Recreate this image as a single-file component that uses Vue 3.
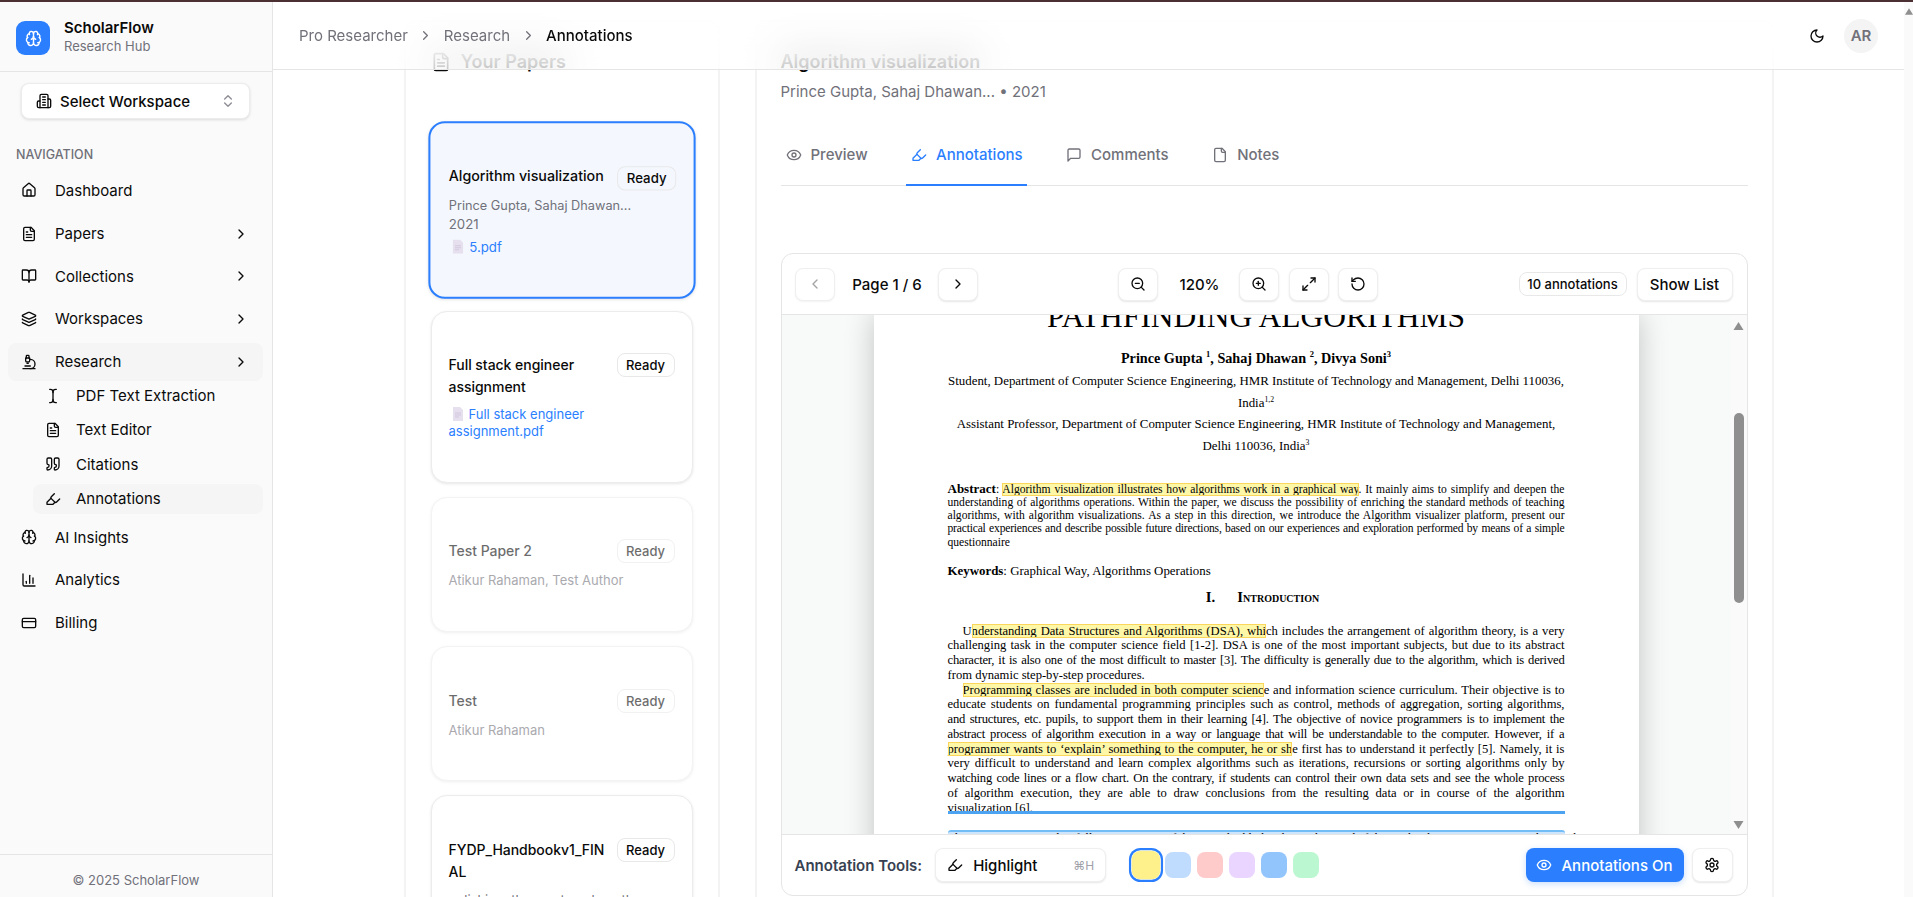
<script setup>
import { h } from "vue";

const icons = {
  brain: ["M12 18V5", "M15 13a4.17 4.17 0 0 1-3-4 4.17 4.17 0 0 1-3 4", "M17.598 6.5A3 3 0 1 0 12 5a3 3 0 1 0-5.598 1.5", "M17.997 5.125a4 4 0 0 1 2.526 5.77", "M18 18a4 4 0 0 0 2-7.464", "M19.967 17.483A4 4 0 1 1 12 18a4 4 0 1 1-7.967-.517", "M6 18a4 4 0 0 1-2-7.464", "M6.003 5.125a4 4 0 0 0-2.526 5.77"],
  building: ["M6 22V4a2 2 0 0 1 2-2h8a2 2 0 0 1 2 2v18Z", "M6 12H4a2 2 0 0 0-2 2v6a2 2 0 0 0 2 2h2", "M18 9h2a2 2 0 0 1 2 2v9a2 2 0 0 1-2 2h-2", "M10 6h4", "M10 10h4", "M10 14h4", "M10 18h4"],
  updown: ["m7 15 5 5 5-5", "m7 9 5-5 5 5"],
  house: ["M15 21v-8a1 1 0 0 0-1-1h-4a1 1 0 0 0-1 1v8", "M3 10a2 2 0 0 1 .709-1.528l7-5.999a2 2 0 0 1 2.582 0l7 5.999A2 2 0 0 1 21 10v9a2 2 0 0 1-2 2H5a2 2 0 0 1-2-2z"],
  filetext: ["M15 2H6a2 2 0 0 0-2 2v16a2 2 0 0 0 2 2h12a2 2 0 0 0 2-2V7Z", "M14 2v4a2 2 0 0 0 2 2h4", "M10 9H8", "M16 13H8", "M16 17H8"],
  book: ["M12 7v14", "M3 18a1 1 0 0 1-1-1V4a1 1 0 0 1 1-1h5a4 4 0 0 1 4 4 4 4 0 0 1 4-4h5a1 1 0 0 1 1 1v13a1 1 0 0 1-1 1h-6a3 3 0 0 0-3 3 3 3 0 0 0-3-3z"],
  layers: ["M12.83 2.18a2 2 0 0 0-1.66 0L2.6 6.08a1 1 0 0 0 0 1.83l8.58 3.91a2 2 0 0 0 1.66 0l8.58-3.9a1 1 0 0 0 0-1.83z", "M2 12a1 1 0 0 0 .58.91l8.6 3.91a2 2 0 0 0 1.65 0l8.58-3.9A1 1 0 0 0 22 12", "M2 17a1 1 0 0 0 .58.91l8.6 3.91a2 2 0 0 0 1.65 0l8.58-3.9A1 1 0 0 0 22 17"],
  microscope: ["M6 18h8", "M3 22h18", "M14 22a7 7 0 1 0 0-14h-1", "M9 14h2", "M9 12a2 2 0 0 1-2-2V6h6v4a2 2 0 0 1-2 2Z", "M12 6V3a1 1 0 0 0-1-1H9a1 1 0 0 0-1 1v3"],
  cursor: ["M17 22h-1a4 4 0 0 1-4-4V6a4 4 0 0 1 4-4h1", "M7 22h1a4 4 0 0 0 4-4v-1", "M7 2h1a4 4 0 0 1 4 4v1"],
  quote: ["M16 3a2 2 0 0 0-2 2v6a2 2 0 0 0 2 2 1 1 0 0 1 1 1v1a2 2 0 0 1-2 2 1 1 0 0 0-1 1v2a1 1 0 0 0 1 1 6 6 0 0 0 6-6V5a2 2 0 0 0-2-2z", "M5 3a2 2 0 0 0-2 2v6a2 2 0 0 0 2 2 1 1 0 0 1 1 1v1a2 2 0 0 1-2 2 1 1 0 0 0-1 1v2a1 1 0 0 0 1 1 6 6 0 0 0 6-6V5a2 2 0 0 0-2-2z"],
  highlighter: ["m9 11-6 6v3h9l3-3", "m22 12-4.6 4.6a2 2 0 0 1-2.8 0l-5.2-5.2a2 2 0 0 1 0-2.8L14 4"],
  chart: ["M3 3v16a2 2 0 0 0 2 2h16", "M18 17V9", "M13 17V5", "M8 17v-3"],
  card: ["M4 5h16a2 2 0 0 1 2 2v10a2 2 0 0 1-2 2H4a2 2 0 0 1-2-2V7a2 2 0 0 1 2-2z", "M2 10h20"],
  right: ["m9 18 6-6-6-6"],
  left: ["m15 18-6-6 6-6"],
  eye: ["M2.062 12.348a1 1 0 0 1 0-.696 10.75 10.75 0 0 1 19.876 0 1 1 0 0 1 0 .696 10.75 10.75 0 0 1-19.876 0", "M9 12a3 3 0 1 0 6 0a3 3 0 1 0-6 0"],
  message: ["M21 15a2 2 0 0 1-2 2H7l-4 4V5a2 2 0 0 1 2-2h14a2 2 0 0 1 2 2z"],
  file: ["M15 2H6a2 2 0 0 0-2 2v16a2 2 0 0 0 2 2h12a2 2 0 0 0 2-2V7Z", "M14 2v4a2 2 0 0 0 2 2h4"],
  zoomout: ["M3 11a8 8 0 1 0 16 0a8 8 0 1 0-16 0", "m21 21-4.35-4.35", "M8 11h6"],
  zoomin: ["M3 11a8 8 0 1 0 16 0a8 8 0 1 0-16 0", "m21 21-4.35-4.35", "M8 11h6", "M11 8v6"],
  expand: ["M15 3h6v6", "m21 3-7 7", "m3 21 7-7", "M9 21H3v-6"],
  rotate: ["M3 12a9 9 0 1 0 9-9 9.75 9.75 0 0 0-6.74 2.74L3 8", "M3 3v5h5"],
  gear: ["M12.22 2h-.44a2 2 0 0 0-2 2v.18a2 2 0 0 1-1 1.73l-.43.25a2 2 0 0 1-2 0l-.15-.08a2 2 0 0 0-2.73.73l-.22.38a2 2 0 0 0 .73 2.73l.15.1a2 2 0 0 1 1 1.72v.51a2 2 0 0 1-1 1.74l-.15.09a2 2 0 0 0-.73 2.73l.22.38a2 2 0 0 0 2.73.73l.15-.08a2 2 0 0 1 2 0l.43.25a2 2 0 0 1 1 1.73V20a2 2 0 0 0 2 2h.44a2 2 0 0 0 2-2v-.18a2 2 0 0 1 1-1.73l.43-.25a2 2 0 0 1 2 0l.15.08a2 2 0 0 0 2.73-.73l.22-.39a2 2 0 0 0-.73-2.73l-.15-.08a2 2 0 0 1-1-1.74v-.5a2 2 0 0 1 1-1.74l.15-.09a2 2 0 0 0 .73-2.73l-.22-.38a2 2 0 0 0-2.73-.73l-.15.08a2 2 0 0 1-2 0l-.43-.25a2 2 0 0 1-1-1.73V4a2 2 0 0 0-2-2z", "M9 12a3 3 0 1 0 6 0a3 3 0 1 0-6 0"],
  moon: ["M12 3a6 6 0 0 0 9 9 9 9 0 1 1-9-9Z"],
};

const Icon = (props) =>
  h(
    "svg",
    { viewBox: "0 0 24 24", fill: "none", stroke: "currentColor", "stroke-width": 2, "stroke-linecap": "round", "stroke-linejoin": "round" },
    icons[props.name].map((d) => h("path", { d })),
  );
Icon.props = ["name"];

const navTop = [
  { label: "Dashboard", icon: "house" },
  { label: "Papers", icon: "filetext", more: true },
  { label: "Collections", icon: "book", more: true },
  { label: "Workspaces", icon: "layers", more: true },
  { label: "Research", icon: "microscope", more: true, active: true },
];
const navSub = [
  { label: "PDF Text Extraction", icon: "cursor" },
  { label: "Text Editor", icon: "filetext" },
  { label: "Citations", icon: "quote" },
  { label: "Annotations", icon: "highlighter", active: true },
];
const navBottom = [
  { label: "AI Insights", icon: "brain" },
  { label: "Analytics", icon: "chart" },
  { label: "Billing", icon: "card" },
];

const tabs = [
  { label: "Preview", icon: "eye" },
  { label: "Annotations", icon: "highlighter", active: true },
  { label: "Comments", icon: "message" },
  { label: "Notes", icon: "file" },
];

const papers = [
  { title: "Algorithm visualization", authors: "Prince Gupta, Sahaj Dhawan...", year: "2021", file: "5.pdf", cls: "selected" },
  { title: "Full stack engineer assignment", file: "Full stack engineer assignment.pdf", cls: "tall" },
  { title: "Test Paper 2", authors: "Atikur Rahaman, Test Author", cls: "dim" },
  { title: "Test", authors: "Atikur Rahaman", cls: "dim" },
  { title: "FYDP_Handbookv1_FINAL", authors: "polishing, the must work on the...", cls: "last" },
];

const swatches = ["#fef08a", "#bfdbfe", "#fecaca", "#e9d5ff", "#93c5fd", "#bbf7d0"];

const affiliations = [
  { text: "Student, Department of Computer Science Engineering, HMR Institute of Technology and Management, Delhi 110036,", sup: "" },
  { text: "India", sup: "1,2" },
  { text: "Assistant Professor, Department of Computer Science Engineering, HMR Institute of Technology and Management,", sup: "" },
  { text: "Delhi 110036, India", sup: "3" },
];

const abstractLines = [
  { text: "understanding of algorithms operations. Within the paper, we discuss the possibility of enriching the standard methods of teaching" },
  { text: "algorithms, with algorithm visualizations. As a step in this direction, we introduce the Algorithm visualizer platform, present our" },
  { text: "practical experiences and describe possible future directions, based on our experiences and exploration performed by means of a simple", tight: true },
];

const bodyLines = [
  { pre: "U", mark: "nderstanding Data Structures and Algorithms (DSA), whi", post: "ch includes the arrangement of algorithm theory, is a very", indent: true },
  { pre: "challenging task in the computer science field [1-2]. DSA is one of the most important subjects, but due to its abstract" },
  { pre: "character, it is also one of the most difficult to master [3]. The difficulty is generally due to the algorithm, which is derived", tight: true },
  { pre: "from dynamic step-by-step procedures.", end: true },
  { mark: "Programming classes are included in both computer scienc", post: "e and information science curriculum. Their objective is to", indent: true },
  { pre: "educate students on fundamental programming principles such as control, methods of aggregation, sorting algorithms," },
  { pre: "and structures, etc. pupils, to support them in their learning [4]. The objective of novice programmers is to implement the", tight: true },
  { pre: "abstract process of algorithm execution in a way or language that will be understandable to the computer. However, if a", tight: true },
  { mark: "programmer wants to ‘explain’ something to the computer, he or sh", post: "e first has to understand it perfectly [5]. Namely, it is" },
  { pre: "very difficult to understand and learn complex algorithms such as iterations, recursions or sorting algorithms only by" },
  { pre: "watching code lines or a flow chart. On the contrary, if students can control their own data sets and see the whole process", tight: true },
  { pre: "of algorithm execution, they are able to draw conclusions from the resulting data or in course of the algorithm" },
  { pre: "visualization [6].", end: true },
];
</script>

<template>
  <div class="topline"></div>
  <div class="shell">
    <aside class="sidebar">
      <div class="brand">
        <div class="logo"><Icon name="brain" class="logo-ic" /></div>
        <div>
          <div class="brand-name">ScholarFlow</div>
          <div class="brand-sub">Research Hub</div>
        </div>
      </div>

      <button class="workspace">
        <Icon name="building" class="ic" />
        <span class="workspace-label">Select Workspace</span>
        <Icon name="updown" class="ic updown" />
      </button>

      <div class="nav-title">NAVIGATION</div>
      <nav class="nav">
        <a v-for="item in navTop" :key="item.label" class="nav-item" :class="{ active: item.active }">
          <Icon :name="item.icon" class="ic" />
          <span class="nav-label">{{ item.label }}</span>
          <Icon v-if="item.more" name="right" class="ic chev" />
        </a>
        <div class="sub">
          <a v-for="item in navSub" :key="item.label" class="sub-item" :class="{ active: item.active }">
            <Icon :name="item.icon" class="ic" />
            <span>{{ item.label }}</span>
          </a>
        </div>
        <a v-for="item in navBottom" :key="item.label" class="nav-item">
          <Icon :name="item.icon" class="ic" />
          <span class="nav-label">{{ item.label }}</span>
        </a>
      </nav>
      <div class="side-foot">© 2025 ScholarFlow</div>
    </aside>

    <main class="main">
      <header class="topbar">
        <span class="crumb">Pro Researcher</span>
        <Icon name="right" class="crumb-sep" />
        <span class="crumb">Research</span>
        <Icon name="right" class="crumb-sep" />
        <span class="crumb current">Annotations</span>
        <Icon name="moon" class="ic moon" />
        <div class="avatar">AR</div>
      </header>

      <div class="content">
        <section class="panel papers">
          <h2 class="papers-title"><Icon name="filetext" class="ic" />Your Papers</h2>
          <div class="paper-list">
            <article v-for="p in papers" :key="p.title" class="paper" :class="p.cls">
              <div class="paper-head">
                <div class="paper-name">{{ p.title }}</div>
                <span class="badge ready">Ready</span>
              </div>
              <div v-if="p.authors" class="paper-meta">{{ p.authors }}</div>
              <div v-if="p.year" class="paper-year">{{ p.year }}</div>
              <div v-if="p.file" class="paper-file">
                <svg class="doc" viewBox="0 0 12 14">
                  <path d="M1 0h7l3 3v11H1z" fill="#e6e0ee" />
                  <path d="M3 6h6M3 8h6M3 10h4" stroke="#d2c8de" fill="none" />
                </svg>{{ p.file }}
              </div>
            </article>
          </div>
        </section>

        <section class="panel detail">
          <h1 class="detail-title">Algorithm visualization</h1>
          <div class="detail-sub">Prince Gupta, Sahaj Dhawan... • 2021</div>
          <div class="tabs">
            <a v-for="t in tabs" :key="t.label" class="tab" :class="{ active: t.active }">
              <Icon :name="t.icon" class="ic" />{{ t.label }}
            </a>
          </div>

          <div class="viewer">
            <div class="toolbar">
              <div class="group">
                <button class="btn disabled"><Icon name="left" class="ic" /></button>
                <span class="page-no">Page 1 / 6</span>
                <button class="btn"><Icon name="right" class="ic" /></button>
              </div>
              <div class="group">
                <button class="btn"><Icon name="zoomout" class="ic" /></button>
                <span class="zoom-val">120%</span>
                <button class="btn"><Icon name="zoomin" class="ic" /></button>
                <button class="btn tool-gap"><Icon name="expand" class="ic" /></button>
                <button class="btn tool-gap"><Icon name="rotate" class="ic" /></button>
              </div>
              <div class="group">
                <span class="badge count">10 annotations</span>
                <button class="btn text-btn">Show List</button>
              </div>
            </div>

            <div class="pdf">
              <div class="pdf-scroll">
                <div class="page">
                  <div class="p-title">PATHFINDING ALGORITHMS</div>
                  <div class="p-authors">Prince Gupta <sup>1</sup>, Sahaj Dhawan <sup>2</sup>, Divya Soni<sup>3</sup></div>
                  <div class="p-affils">
                    <div v-for="a in affiliations" :key="a.text" class="p-affil">{{ a.text }}<sup v-if="a.sup">{{ a.sup }}</sup></div>
                  </div>
                  <div class="p-abstract">
                    <div class="ln"><b>Abstract</b>: <mark class="boxed">Algorithm visualization illustrates how algorithms work in a graphical way</mark>. It mainly aims to simplify and deepen the</div>
                    <div v-for="l in abstractLines" :key="l.text" class="ln" :class="{ tight: l.tight }">{{ l.text }}</div>
                    <div class="ln end">questionnaire</div>
                  </div>
                  <div class="p-keywords"><b>Keywords</b>: Graphical Way, Algorithms Operations</div>
                  <div class="p-heading"><span>I.</span><span>Introduction</span></div>
                  <div class="p-body">
                    <div v-for="l in bodyLines" :key="l.pre + l.post" class="ln" :class="{ indent: l.indent, end: l.end, tight: l.tight }">{{ l.pre }}<mark v-if="l.mark" class="boxed">{{ l.mark }}</mark>{{ l.post }}</div>
                  </div>
                  <div class="rule"></div>
                  <div class="selection">This paper is presented as follows. Section 2 of the paper highlights the Background of the work. This section points out the Need</div>
                </div>
              </div>
              <div class="pdf-bar">
                <svg class="arrow" viewBox="0 0 10 8"><path d="M5 0l5 8H0z" /></svg>
                <div class="thumb"></div>
                <svg class="arrow down" viewBox="0 0 10 8"><path d="M5 8l5-8H0z" /></svg>
              </div>
            </div>

            <div class="tools">
              <span class="tools-label">Annotation Tools:</span>
              <button class="btn tool-pick">
                <Icon name="highlighter" class="ic" />
                <span class="pick-name">Highlight</span>
                <span class="kbd">⌘H</span>
              </button>
              <div class="swatches">
                <span v-for="(c, i) in swatches" :key="c" class="swatch" :class="{ on: i === 0 }" :style="{ background: c }"></span>
              </div>
              <button class="on-btn"><Icon name="eye" class="ic" />Annotations On</button>
              <button class="btn gear"><Icon name="gear" class="ic" /></button>
            </div>
          </div>
        </section>
      </div>
    </main>

    <div class="win-bar">
      <svg class="win-arrow" viewBox="0 0 10 8"><path d="M5 0l5 8H0z" /></svg>
    </div>
  </div>
</template>

<style>
html,
body {
  margin: 0;
  height: 100%;
  overflow: hidden;
  background: #fff;
}
</style>

<style scoped>
.topline {
  height: 2px;
  background: #4a3032;
}

.shell {
  display: flex;
  height: 895px;
  overflow: hidden;
  font-family: Inter, "Liberation Sans", sans-serif;
  font-size: 15px;
  color: #0a0a0a;
}

.ic {
  width: 16px;
  height: 16px;
  flex: none;
}

/* sidebar */
.sidebar {
  width: 272px;
  flex: none;
  display: flex;
  flex-direction: column;
  background: #fafafa;
  border-right: 1px solid #e5e5e5;
}

.brand {
  height: 70px;
  box-sizing: border-box;
  padding-left: 16px;
  padding-bottom: 1px;
  display: flex;
  align-items: center;
  gap: 14px;
  border-bottom: 1px solid #e5e5e5;
}

.logo {
  width: 34px;
  height: 34px;
  margin-top: 4px;
  border-radius: 9px;
  background: #2b7fff;
  color: #fff;
  display: flex;
  align-items: center;
  justify-content: center;
}

.logo-ic {
  width: 17px;
  height: 17px;
}

.brand-name {
  font-weight: 600;
  line-height: 20px;
  margin-top: 1px;
}

.brand-sub {
  font-size: 13px;
  line-height: 17px;
  color: #71717a;
}

.workspace {
  margin: 11px 0 0 21px;
  width: 229px;
  height: 36px;
  padding: 0 13px 0 14px;
  display: flex;
  align-items: center;
  gap: 8px;
  font: 500 15px Inter, sans-serif;
  color: #0a0a0a;
  background: #fff;
  border: 1px solid #ececec;
  border-radius: 8px;
  box-shadow: 0 1px 3px rgba(0, 0, 0, 0.12);
}

.workspace-label {
  flex: 1;
  text-align: left;
}

.updown {
  color: #71717a;
  opacity: 0.8;
}

.nav-title {
  margin: 28px 0 0 16px;
  font-size: 12.5px;
  font-weight: 500;
  line-height: 16px;
  color: #6f6f78;
}

.nav {
  flex: 1;
  margin-top: 8px;
  padding: 0 9px 0 8px;
  display: flex;
  flex-direction: column;
}

.nav-item {
  height: 38px;
  margin-bottom: 4.65px;
  padding: 0 14px 0 13px;
  display: flex;
  align-items: center;
  gap: 18px;
  border-radius: 8px;
}

.nav-item:first-child {
  margin-bottom: 5.65px;
}

.nav-item.active {
  background: #f5f5f5;
  margin-bottom: 0;
}

.nav-label {
  flex: 1;
}

.chev {
  width: 16px;
  height: 16px;
}

.sub {
  margin: 0 0 4.5px 25px;
  display: flex;
  flex-direction: column;
  gap: 4.4px;
}

.sub-item {
  height: 30px;
  padding: 0 0 0 12px;
  display: flex;
  align-items: center;
  gap: 15px;
  border-radius: 8px;
}

.sub-item.active {
  background: #f5f5f5;
}

.side-foot {
  height: 43px;
  box-sizing: border-box;
  padding-top: 17px;
  border-top: 1px solid #e5e5e5;
  font-size: 13px;
  line-height: 17px;
  text-align: center;
  color: #71717a;
}

/* top bar */
.main {
  flex: 1;
  min-width: 0;
  overflow: hidden;
}

.topbar {
  position: sticky;
  top: 0;
  z-index: 5;
  height: 68px;
  box-sizing: border-box;
  padding: 0 26px 0 26px;
  display: flex;
  align-items: center;
  background: rgba(255, 255, 255, 0.6);
  backdrop-filter: blur(20px);
  border-bottom: 1px solid #e5e5e5;
}

.crumb {
  color: #71717a;
}

.crumb.current {
  color: #0a0a0a;
  font-weight: 500;
}

.crumb-sep {
  width: 15px;
  height: 15px;
  margin: 0 10.5px;
  color: #71717a;
  fill: none;
}

.moon {
  margin-left: auto;
  margin-right: 19px;
}

.avatar {
  width: 34px;
  height: 34px;
  border-radius: 50%;
  background: #f4f4f5;
  color: #71717a;
  font-weight: 600;
  display: flex;
  align-items: center;
  justify-content: center;
}

/* content columns */
.content {
  width: 1370px;
  margin: -50px auto 0;
  display: flex;
  gap: 35px;
}

.panel {
  box-sizing: border-box;
  height: 1000px;
  border: 2px solid #f3f3f3;
  border-radius: 12px;
  padding-top: 26px;
}

.papers {
  width: 316px;
  flex: none;
  padding-left: 25px;
}

.papers-title {
  margin: 0;
  display: flex;
  align-items: center;
  gap: 10px;
  font-size: 18px;
  font-weight: 600;
  line-height: 28px;
}

.papers-title .ic {
  width: 20px;
  height: 20px;
}

.paper-list {
  margin-top: 47px;
  width: 262px;
  display: flex;
  flex-direction: column;
  gap: 14px;
}

.paper {
  box-sizing: border-box;
  min-height: 135px;
  padding: 42px 17px 41px 17px;
  background: #fff;
  border: 1px solid #ececec;
  border-radius: 16px;
  box-shadow: 0 1px 3px rgba(0, 0, 0, 0.1);
}

.paper.selected {
  height: 174px;
  background: #f4f8fe;
  border: 2px solid #2b7fff;
  padding: 41px 17px 41px 18px;
  transform: scale(1.02);
}

.paper.tall {
  height: 172px;
}

.paper.dim {
  opacity: 0.6;
}

.paper.dim + .paper.dim,
.paper.last {
  padding-top: 43px;
}

.paper-head {
  display: flex;
  justify-content: space-between;
  align-items: flex-start;
  gap: 6px;
}

.paper-name {
  flex: 1;
  min-width: 0;
  font-size: 14px;
  font-weight: 500;
  letter-spacing: -0.03px;
  line-height: 22px;
  overflow-wrap: anywhere;
}

.paper-meta {
  margin-top: 8px;
  font-size: 13px;
  line-height: 18px;
  color: #71717a;
}

.selected .paper-meta {
  margin-top: 5.5px;
  font-size: 12.5px;
}

.paper-year {
  font-size: 13px;
  line-height: 18px;
  color: #71717a;
}

.paper-file {
  margin-top: 5px;
  font-size: 13px;
  line-height: 17px;
  color: #2b7fff;
}

.tall .paper-file {
  margin-top: 8px;
}

.doc {
  width: 12px;
  height: 14px;
  margin: 0 5px 0 3px;
  vertical-align: -2px;
}

.badge {
  flex: none;
  box-sizing: border-box;
  display: inline-flex;
  align-items: center;
  justify-content: center;
  height: 24px;
  font-size: 13px;
  font-weight: 500;
  background: #fff;
  border: 1px solid #e8e8e8;
  border-radius: 8px;
}

.ready {
  width: 58px;
  margin-top: -1px;
}

.selected .ready {
  background: transparent;
  margin-top: 1px;
}

/* detail column */
.detail {
  flex: 1;
  min-width: 0;
  padding-left: 24px;
  padding-right: 24px;
}

.detail-title {
  margin: 0;
  font-size: 18px;
  font-weight: 600;
  line-height: 28px;
}

.detail-sub {
  margin-top: 6px;
  line-height: 20px;
  color: #71717a;
}

.tabs {
  margin-top: 23.5px;
  display: flex;
  gap: 34.5px;
  border-bottom: 1px solid #e5e5e5;
}

.tab {
  height: 60px;
  box-sizing: border-box;
  padding: 0 4px 0 5px;
  display: flex;
  align-items: center;
  gap: 9px;
  font-weight: 500;
  color: #71717a;
  margin-bottom: -1px;
  border-bottom: 2px solid transparent;
}

.tab.active {
  color: #2b7fff;
  border-bottom-color: #2b7fff;
}

/* viewer */
.viewer {
  margin-top: 67.5px;
  height: 641px;
  display: flex;
  flex-direction: column;
  border: 1px solid #e5e5e5;
  border-radius: 12px;
  overflow: hidden;
  background: #fff;
}

.toolbar {
  height: 61px;
  flex: none;
  box-sizing: border-box;
  padding: 0 14px 0 13px;
  display: flex;
  align-items: center;
  justify-content: space-between;
  border-bottom: 1px solid #e5e5e5;
}

.group {
  display: flex;
  align-items: center;
}

.btn {
  width: 40px;
  height: 33px;
  padding: 0;
  display: inline-flex;
  align-items: center;
  justify-content: center;
  color: #0a0a0a;
  background: #fff;
  border: 1px solid #efefef;
  border-radius: 8px;
  box-shadow: 0 1px 2px rgba(0, 0, 0, 0.1);
}

.btn.disabled {
  color: #a3a3a3;
  box-shadow: 0 1px 2px rgba(0, 0, 0, 0.05);
}

.page-no {
  width: 103px;
  text-indent: 2px;
  text-align: center;
  font-weight: 500;
}

.zoom-val {
  width: 81px;
  text-indent: 2px;
  text-align: center;
  font-weight: 500;
}

.tool-gap {
  margin-left: 9.5px;
}

.count {
  width: 108px;
  margin-right: 10px;
}

.text-btn {
  width: 96px;
  font: 500 15px Inter, sans-serif;
}

.pdf {
  flex: 1;
  min-height: 0;
  display: flex;
  background: #f8f9f9;
}

.pdf-scroll {
  flex: 1;
  min-width: 0;
  overflow: hidden;
  display: flex;
  justify-content: center;
}

.page {
  width: 765px;
  height: 900px;
  flex: none;
  box-sizing: border-box;
  padding: 0 74px;
  background: #fff;
  color: #000;
  box-shadow: 0 0 28px rgba(0, 0, 0, 0.22);
  font-family: "Liberation Serif", "Times New Roman", serif;
}

.p-title {
  margin-top: -13px;
  font-size: 31.5px;
  line-height: 30px;
  text-align: center;
  white-space: nowrap;
}

.p-authors {
  margin-top: 16px;
  font-size: 14.2px;
  line-height: 20px;
  font-weight: 700;
  text-align: center;
}

.p-authors sup,
.p-affil sup {
  font-size: 0.6em;
  line-height: 0;
}

.p-affils {
  margin-top: 3px;
}

.p-affil {
  height: 21.6px;
  line-height: 21.6px;
  font-size: 12.9px;
  text-align: center;
  white-space: nowrap;
}

.p-abstract {
  margin-top: 25px;
  font-size: 11.6px;
}

.p-abstract b {
  font-size: 13px;
}

.ln {
  white-space: nowrap;
  text-align: justify;
  text-align-last: justify;
}

.ln.end {
  text-align-last: left;
}

.ln.tight {
  letter-spacing: -0.2px;
}

.p-abstract .ln {
  height: 13.35px;
  line-height: 13.35px;
}

.p-keywords {
  margin-top: 15px;
  font-size: 12.9px;
  line-height: 14px;
}

.p-heading {
  margin-top: 12px;
  padding-left: 13px;
  display: flex;
  justify-content: center;
  gap: 22px;
  font-size: 14.8px;
  line-height: 14px;
  font-weight: 700;
  font-variant: small-caps;
}

.p-body {
  margin-top: 19.6px;
  font-size: 12.6px;
}

.p-body .ln {
  height: 14.75px;
  line-height: 14.75px;
}

.ln.indent {
  padding-left: 15px;
}

.boxed {
  color: inherit;
  background: #fff7a8;
  outline: 1px solid #fad75a;
  outline-offset: -1px;
}

.rule {
  margin-top: -4.4px;
  height: 3px;
  background: #4ba3f2;
  position: relative;
}

.selection {
  margin-top: 16px;
  border-top: 2px solid #73bdf6;
  border-radius: 3px 3px 0 0;
  background: #cfe5fb;
  font-size: 12.1px;
  line-height: 12px;
  white-space: nowrap;
  text-align: justify;
  text-align-last: justify;
}

.pdf-bar {
  width: 16px;
  flex: none;
  box-sizing: border-box;
  padding: 7px 3px 5px;
  display: flex;
  flex-direction: column;
  align-items: center;
  background: #fafafa;
}

.arrow {
  width: 11px;
  height: 8px;
  flex: none;
  fill: #8f8f8f;
}

.thumb {
  width: 10px;
  height: 190px;
  margin-top: 83px;
  border-radius: 5px;
  background: #8f8f8f;
}

.arrow.down {
  margin-top: auto;
}

.tools {
  height: 61px;
  flex: none;
  box-sizing: border-box;
  padding: 0 14px 0 13px;
  display: flex;
  align-items: center;
  border-top: 1px solid #e5e5e5;
}

.tools-label {
  font-weight: 600;
  color: #374151;
  margin-right: 13px;
}

.tool-pick {
  width: 171px;
  height: 34px;
  padding: 0 11px;
  justify-content: flex-start;
  font: 500 15px Inter, sans-serif;
}

.pick-name {
  margin-left: 10px;
  flex: 1;
  text-align: left;
}

.kbd {
  font-size: 12px;
  font-weight: 400;
  color: #a1a1aa;
}

.swatches {
  margin-left: 27px;
  display: flex;
  gap: 6px;
}

.swatch {
  width: 26px;
  height: 26px;
  border-radius: 8px;
}

.swatch.on {
  transform: scale(1.1);
  box-shadow: 0 0 0 0.5px #fff, 0 0 0 2.5px #2b7fff;
}

.on-btn {
  margin-left: auto;
  width: 158px;
  height: 34px;
  display: flex;
  align-items: center;
  justify-content: center;
  gap: 9px;
  font: 500 15px Inter, sans-serif;
  color: #fff;
  background: #2b7fff;
  border: none;
  border-radius: 8px;
  box-shadow: 0 2px 6px rgba(43, 127, 255, 0.25);
}

.gear {
  width: 41px;
  height: 34px;
  margin-left: 8px;
}

.win-bar {
  width: 9px;
  flex: none;
  background: #fafafa;
  display: flex;
  justify-content: center;
  padding-top: 6px;
  box-sizing: border-box;
}

.win-arrow {
  width: 8px;
  height: 7px;
  fill: #8f8f8f;
}
</style>
